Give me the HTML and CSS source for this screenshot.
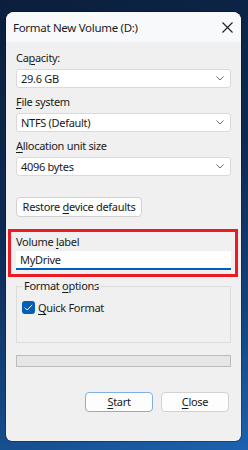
FILE: index.html
```html
<!DOCTYPE html>
<html lang="en">
<head>
  <link rel="stylesheet" href="styles.css">
</head>
<body>
  <div class="window">
    <div class="titlebar">
      <span class="title">Format New Volume (D:)</span>
      <svg class="close-x" width="11" height="11" viewBox="0 0 11 11">
        <path d="M0.5 0.5 L10.5 10.5 M10.5 0.5 L0.5 10.5" stroke="#1f1f1f" stroke-width="1.1" fill="none"/>
      </svg>
    </div>

    <div class="content">
      <div class="field">
        <label>Ca<u>p</u>acity:</label>
        <div class="select"><span>29.6 GB</span><svg class="chev" width="8" height="5" viewBox="0 0 8 5"><path d="M0.5 0.5 L4 4 L7.5 0.5" stroke="#6b6b6b" fill="none"/></svg></div>
      </div>
      <div class="field">
        <label><u>F</u>ile system</label>
        <div class="select"><span>NTFS (Default)</span><svg class="chev" width="8" height="5" viewBox="0 0 8 5"><path d="M0.5 0.5 L4 4 L7.5 0.5" stroke="#6b6b6b" fill="none"/></svg></div>
      </div>
      <div class="field">
        <label><u>A</u>llocation unit size</label>
        <div class="select"><span>4096 bytes</span><svg class="chev" width="8" height="5" viewBox="0 0 8 5"><path d="M0.5 0.5 L4 4 L7.5 0.5" stroke="#6b6b6b" fill="none"/></svg></div>
      </div>

      <div class="btn restore">Restore <u>d</u>evice defaults</div>

      <div class="highlight">
        <label>Volume <u>l</u>abel</label>
        <div class="textbox">MyDrive</div>
      </div>

      <div class="group">
        <span class="legend">Format <u>o</u>ptions</span>
        <div class="check-row">
          <span class="checkbox">
            <svg width="9" height="7" viewBox="0 0 9 7"><path d="M0.8 3.6 L3.2 6 L8.2 0.8" stroke="#ffffff" stroke-width="1" fill="none"/></svg>
          </span>
          <span><u>Q</u>uick Format</span>
        </div>
      </div>

      <div class="progress"></div>

      <div class="actions">
        <div class="btn default"><u>S</u>tart</div>
        <div class="btn"><u>C</u>lose</div>
      </div>
    </div>
  </div>
</body>
</html>
```

FILE: styles.css
```css
body {
  margin: 0;
  width: 248px;
  height: 450px;
  overflow: hidden;
  background: linear-gradient(160deg, #0b1f3d 0%, #0e2b54 45%, #14457f 75%, #1c62b0 100%);
  font-family: "Noto Sans", sans-serif;
  font-size: 11px;
  letter-spacing: -0.3px;
  color: #1a1a1a;
}

u {
  text-decoration-thickness: 1px;
  text-underline-offset: 2px;
}

.window {
  margin: 12px 7px 0 6px;
  height: 429px;
  background-color: #f0f0f0;
  border-radius: 8px 8px 6px 6px;
  box-shadow: 0 0 0 1px rgba(0, 0, 0, 0.25);
  overflow: hidden;
  display: flex;
  flex-direction: column;
}

.titlebar {
  height: 30px;
  background-color: #f8f9fb;
  display: flex;
  align-items: center;
  justify-content: space-between;
  padding: 0 8px 0 7px;
}

.title {
  font-size: 11.5px;
  color: #1b1b1b;
}

.close-x {
  margin-top: 1px;
}

.content {
  padding: 8px 10px 0 10px;
  display: flex;
  flex-direction: column;
}

label {
  display: block;
  line-height: 16px;
  height: 16px;
}

.field {
  display: flex;
  flex-direction: column;
  gap: 3px;
  margin-bottom: 6px;
}

.select {
  height: 17px;
  background-color: #ffffff;
  border: 1px solid #dadada;
  border-radius: 3px;
  display: flex;
  align-items: center;
  justify-content: space-between;
  padding: 0 6px 0 4px;
}

.btn {
  height: 18px;
  line-height: 18px;
  background-color: #fdfdfd;
  border: 1px solid #d2d2d2;
  border-radius: 4px;
  text-align: center;
  white-space: nowrap;
}

.restore {
  align-self: flex-start;
  width: 124px;
  margin-top: 15px;
}

.highlight {
  margin: 12px -7px 0 -8px;
  border: 3px solid #ec1a22;
  padding: 2px 4px 4px 5px;
  display: flex;
  flex-direction: column;
  gap: 1px;
}

.textbox {
  height: 17px;
  line-height: 17px;
  background-color: #ffffff;
  border-bottom: 2px solid #005fb8;
  padding: 0 4px;
}

.group {
  margin-top: 9px;
  height: 49px;
  border: 1px solid #dcdcdc;
  border-top: none;
  position: relative;
  padding: 7px 5px 0 5px;
}

.group::before {
  content: "";
  position: absolute;
  top: 0;
  left: 0;
  width: 5px;
  border-top: 1px solid #dcdcdc;
}

.group::after {
  content: "";
  position: absolute;
  top: 0;
  left: 78px;
  right: 0;
  border-top: 1px solid #dcdcdc;
}

.legend {
  position: absolute;
  top: -8px;
  left: 6px;
  line-height: 16px;
  padding: 0 1px;
}

.check-row {
  margin-top: 7px;
  display: flex;
  align-items: center;
  gap: 3px;
}

.checkbox {
  width: 13px;
  height: 13px;
  border-radius: 3px;
  background-color: #005fb8;
  display: flex;
  align-items: center;
  justify-content: center;
}

.progress {
  margin-top: 12px;
  height: 10px;
  background-color: #e6e6e6;
  border: 1px solid #bcbcbc;
}

.actions {
  margin-top: 25px;
  display: flex;
  justify-content: flex-end;
  gap: 8px;
  padding-right: 2px;
}

.actions .btn {
  width: 66px;
}

.actions .default {
  border-color: #7fb0e0;
}
```
